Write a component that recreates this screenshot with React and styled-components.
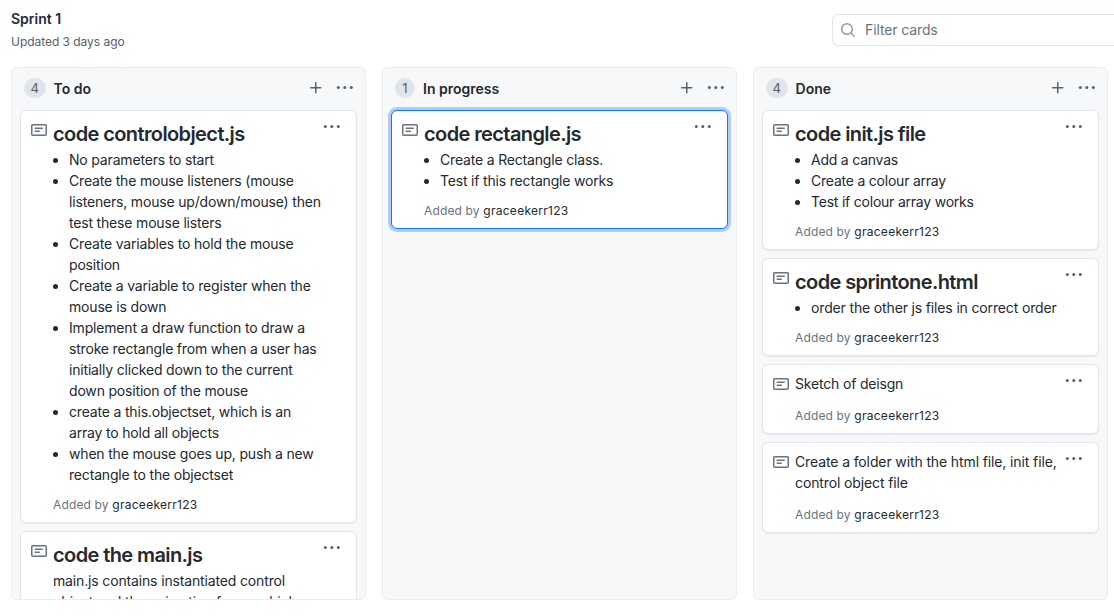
import React from "react";
import styled, { createGlobalStyle } from "styled-components";

const GlobalStyle = createGlobalStyle`
  * { box-sizing: border-box; }
  html, body { margin: 0; height: 100%; overflow: hidden; background: #fff; }
  body {
    font-family: Inter, "Liberation Sans", sans-serif;
    font-size: 14px;
    line-height: 21px;
    color: #24292e;
  }
  svg { display: block; fill: currentColor; }
`;

const Page = styled.div`
  width: 1114px;
  height: 616px;
  overflow: hidden;
`;

const Header = styled.header`
  display: flex;
  justify-content: space-between;
  height: 67px;
  padding-left: 11px;
`;

const Heading = styled.h1`
  margin: 8px 0 0;
  font-size: 14px;
  line-height: 21px;
  font-weight: 600;
  letter-spacing: 0;
`;

const Updated = styled.p`
  margin: 4px 0 0;
  font-size: 12px;
  line-height: 18px;
  color: #586069;
  letter-spacing: -0.04px;
`;

const Filter = styled.div`
  display: flex;
  align-items: center;
  gap: 9px;
  width: 282px;
  height: 32px;
  margin-top: 14px;
  padding-left: 7px;
  border: 1px solid #e1e4e8;
  border-right: 0;
  border-radius: 6px 0 0 6px;
  color: #959da5;
`;

const FilterInput = styled.input`
  flex: 1;
  min-width: 0;
  padding: 0 0 2px;
  border: 0;
  outline: 0;
  background: none;
  font: inherit;
  letter-spacing: -0.12px;
  &::placeholder { color: #6a737d; opacity: 1; }
`;

const Board = styled.main`
  display: flex;
  gap: 16px;
  padding-left: 11px;
`;

const Column = styled.section`
  display: flex;
  flex-direction: column;
  flex: 0 0 355px;
  height: 533px;
  overflow: hidden;
  border: 1px solid #eaecef;
  border-radius: 6px;
  background: #f6f8fa;
`;

const ColumnHeader = styled.div`
  display: flex;
  align-items: center;
  flex: 0 0 42px;
  padding: 0 11px 2px 12px;
  color: #586069;
`;

const Count = styled.span`
  min-width: 20px;
  height: 20px;
  padding: 0 6.6px;
  border-radius: 10px;
  background: #e1e4e8;
  font-size: 13px;
  line-height: 20px;
  text-align: center;
`;

const ColumnName = styled.h2`
  flex: 1;
  margin: 1px 0 0 8px;
  font-size: 14px;
  line-height: 21px;
  font-weight: 600;
  color: #24292e;
`;

const IconButton = styled.button`
  padding: 0;
  border: 0;
  background: none;
  color: #586069;
  margin-left: ${(p) => p.$gap || 0}px;
`;

const Cards = styled.div`
  display: flex;
  flex-direction: column;
  gap: 8px;
  padding: 0 8px;
`;

const CardBox = styled.article`
  display: flex;
  align-items: flex-start;
  flex: none;
  padding: 8px 15px 8px 10px;
  border: 1px solid ${(p) => (p.$focused ? "#1079fb" : "#e1e4e8")};
  border-radius: 6px;
  background: #fff;
  box-shadow: ${(p) => (p.$focused ? "0 0 0 3px #b3ccf2" : "0 1px 1px rgba(149, 157, 165, 0.15)")};
`;

const NoteMark = styled.div`
  flex: 0 0 22px;
  padding-top: 3px;
  color: #6a737d;
`;

const Content = styled.div`
  flex: 1;
  min-width: 0;
  white-space: nowrap;
`;

const CardTitle = styled.h3`
  margin: 3px 0 2px;
  font-size: 20px;
  line-height: 25px;
  font-weight: 600;
  letter-spacing: -0.6px;
`;

const List = styled.ul`
  margin: 0;
  padding-left: 16px;
`;

const Text = styled.p`
  margin: 0;
`;

const Line = styled.span`
  display: block;
  letter-spacing: ${(p) => p.$tracking}px;
`;

const Added = styled.small`
  display: block;
  margin-top: ${(p) => p.$gap}px;
  font-size: 12px;
  line-height: 19px;
  color: #6a737d;
  letter-spacing: 0.15px;
`;

const Author = styled.span`
  color: #24292e;
  letter-spacing: 0.28px;
`;

const Kebab = () => (
  <svg width="18" height="16" viewBox="0 0 18 16">
    <circle cx="2.3" cy="7.5" r="1.5" />
    <circle cx="8.8" cy="7.5" r="1.5" />
    <circle cx="15.3" cy="7.5" r="1.5" />
  </svg>
);

const Plus = () => (
  <svg width="16" height="16" viewBox="0 0 16 16">
    <path d="M7.75 2a.75.75 0 01.75.75V7h4.25a.75.75 0 110 1.5H8.5v4.25a.75.75 0 11-1.5 0V8.5H2.75a.75.75 0 010-1.5H7V2.75A.75.75 0 017.75 2z" />
  </svg>
);

const Note = () => (
  <svg width="16" height="16" viewBox="0 0 16 16">
    <path fillRule="evenodd" d="M0 3.75C0 2.784.784 2 1.75 2h12.5c.966 0 1.75.784 1.75 1.75v8.5A1.75 1.75 0 0114.25 14H1.75A1.75 1.75 0 010 12.25v-8.5zm1.75-.25a.25.25 0 00-.25.25v8.5c0 .138.112.25.25.25h12.5a.25.25 0 00.25-.25v-8.5a.25.25 0 00-.25-.25H1.75zM3.5 6.25a.75.75 0 01.75-.75h7a.75.75 0 010 1.5h-7a.75.75 0 01-.75-.75zm.75 2.25a.75.75 0 000 1.5h4a.75.75 0 000-1.5h-4z" />
  </svg>
);

const Search = () => (
  <svg width="16" height="18" viewBox="0 -1 16 18">
    <path fillRule="evenodd" d="M11.5 7a4.499 4.499 0 11-8.998 0A4.499 4.499 0 0111.5 7zm-.82 4.74a6 6 0 111.06-1.06l3.04 3.04a.75.75 0 11-1.06 1.06l-3.04-3.04z" />
  </svg>
);

const columns = [
  {
    name: "To do",
    count: 4,
    cards: [
      {
        title: "code controlobject.js",
        tracking: -0.18,
        items: [
          ["No parameters to start"],
          ["Create the mouse listeners (mouse", "listeners, mouse up/down/mouse) then", "test these mouse listers"],
          ["Create variables to hold the mouse", "position"],
          ["Create a variable to register when the", "mouse is down"],
          ["Implement a draw function to draw a", "stroke rectangle from when a user has", "initially clicked down to the current", "down position of the mouse"],
          ["create a this.objectset, which is an", "array to hold all objects"],
          ["when the mouse goes up, push a new", "rectangle to the objectset"],
        ],
      },
      {
        title: "code the main.js",
        text: ["main.js contains instantiated control", "object and the animation frame which"],
      },
    ],
  },
  {
    name: "In progress",
    count: 1,
    cards: [
      {
        title: "code rectangle.js",
        focused: true,
        tracking: -0.18,
        items: [["Create a Rectangle class."], ["Test if this rectangle works"]],
      },
    ],
  },
  {
    name: "Done",
    count: 4,
    cards: [
      {
        title: "code init.js file",
        tracking: -0.22,
        items: [["Add a canvas"], ["Create a colour array"], ["Test if colour array works"]],
      },
      {
        title: "code sprintone.html",
        items: [["order the other js files in correct order"]],
      },
      { text: ["Sketch of deisgn"], tracking: -0.18 },
      { text: ["Create a folder with the html file, init file,", "control object file"], tracking: -0.12 },
    ],
  },
];

const Lines = ({ lines, tracking }) =>
  lines.map((line) => <Line key={line} $tracking={tracking}>{line}</Line>);

function Card({ title, items, text, focused, tracking = -0.15 }) {
  return (
    <CardBox $focused={focused}>
      <NoteMark><Note /></NoteMark>
      <Content>
        {title && <CardTitle>{title}</CardTitle>}
        {items && (
          <List>
            {items.map((lines) => (
              <li key={lines[0]}><Lines lines={lines} tracking={tracking} /></li>
            ))}
          </List>
        )}
        {text && <Text><Lines lines={text} tracking={tracking} /></Text>}
        <Added $gap={title ? 10 : 12}>
          Added by <Author>graceekerr123</Author>
        </Added>
      </Content>
      <IconButton aria-label="Card menu"><Kebab /></IconButton>
    </CardBox>
  );
}

export default function App() {
  return (
    <Page>
      <GlobalStyle />
      <Header>
        <div>
          <Heading>Sprint 1</Heading>
          <Updated>Updated 3 days ago</Updated>
        </div>
        <Filter>
          <Search />
          <FilterInput placeholder="Filter cards" />
        </Filter>
      </Header>
      <Board>
        {columns.map((column) => (
          <Column key={column.name}>
            <ColumnHeader>
              <Count>{column.count}</Count>
              <ColumnName>{column.name}</ColumnName>
              <IconButton aria-label="Add card"><Plus /></IconButton>
              <IconButton aria-label="Column menu" $gap={12}><Kebab /></IconButton>
            </ColumnHeader>
            <Cards>
              {column.cards.map((card, i) => <Card key={i} {...card} />)}
            </Cards>
          </Column>
        ))}
      </Board>
    </Page>
  );
}
